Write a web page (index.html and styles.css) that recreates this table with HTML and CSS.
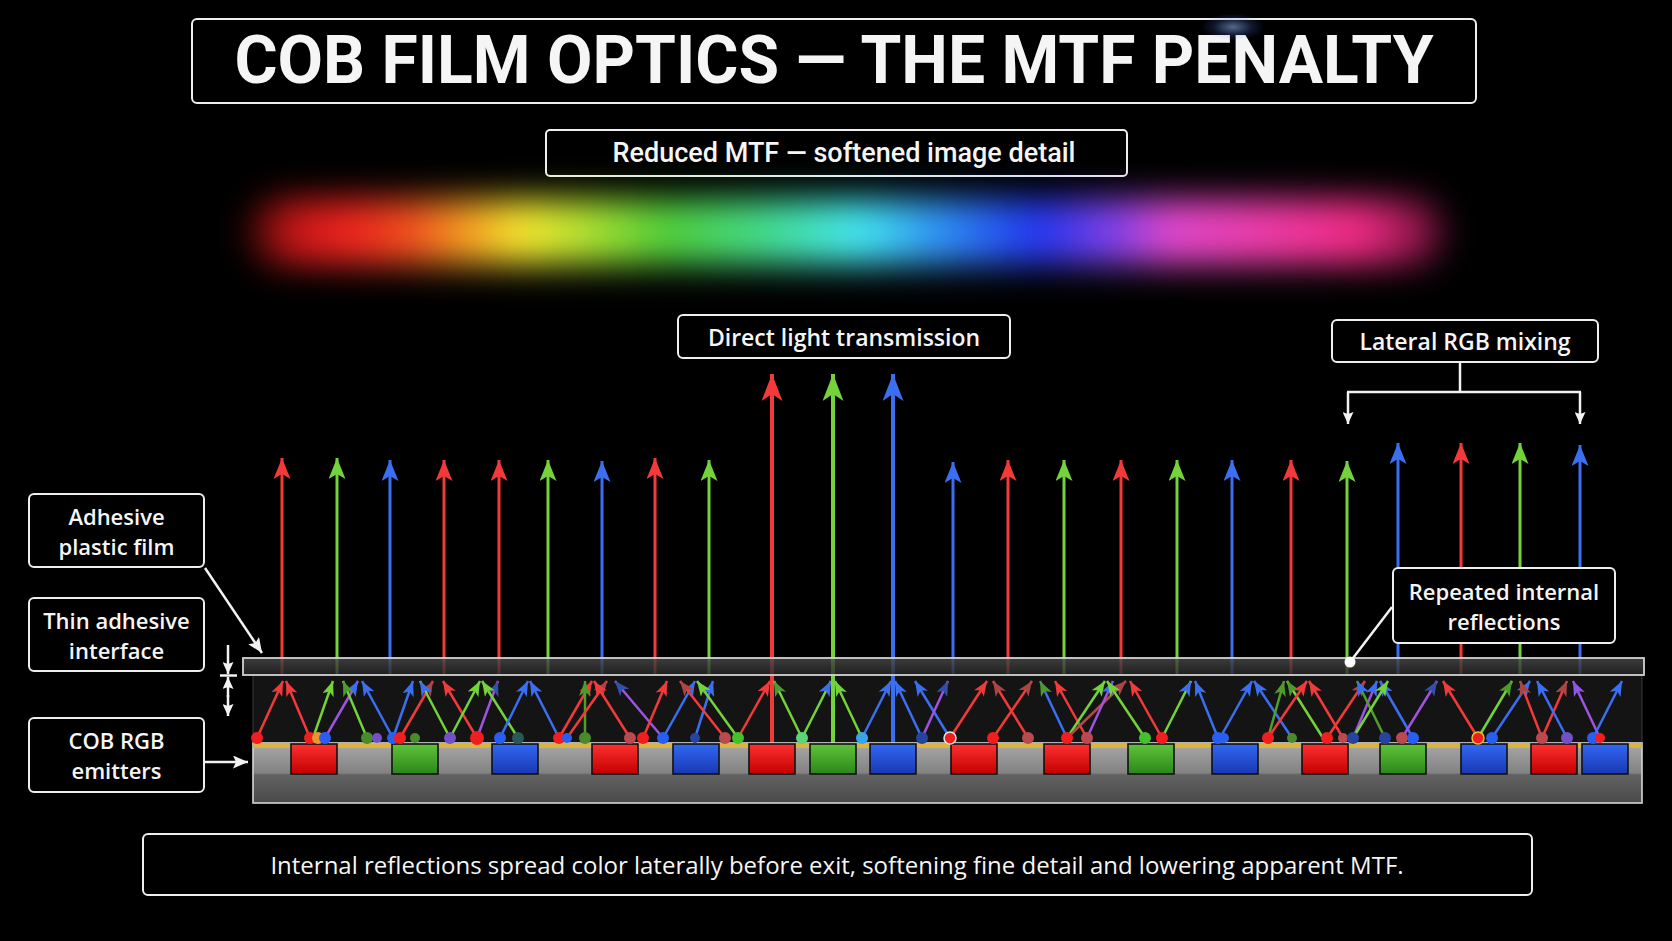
FILE: index.html
```html
<!DOCTYPE html>
<html lang="en">
<head>
<meta charset="utf-8">
<title>COB Film Optics — The MTF Penalty</title>
<link rel="stylesheet" href="styles.css">
</head>
<body>
<div class="page">
  <header class="title-box"><h1 class="title">COB FILM OPTICS — THE MTF PENALTY</h1></header>
  <div class="subtitle">Reduced MTF — softened image detail</div>
  <div class="spectrum"></div>

  <div class="diagram">
    <svg class="diagram-svg" width="1672" height="572" viewBox="0 261 1672 572" xmlns="http://www.w3.org/2000/svg">
      <defs>
        <linearGradient id="gR" x1="0" y1="0" x2="0" y2="1"><stop offset="0" stop-color="#ff3030"/><stop offset="1" stop-color="#c20000"/></linearGradient>
        <linearGradient id="gG" x1="0" y1="0" x2="0" y2="1"><stop offset="0" stop-color="#5fc438"/><stop offset="1" stop-color="#2c861c"/></linearGradient>
        <linearGradient id="gB" x1="0" y1="0" x2="0" y2="1"><stop offset="0" stop-color="#3268f4"/><stop offset="1" stop-color="#1838b2"/></linearGradient>
        <linearGradient id="gSub" x1="0" y1="0" x2="0" y2="1">
          <stop offset="0" stop-color="#a8a8a8"/><stop offset="0.5" stop-color="#828282"/>
          <stop offset="0.53" stop-color="#626262"/><stop offset="1" stop-color="#4a4a4a"/>
        </linearGradient>
        <linearGradient id="gFilm" x1="0" y1="0" x2="0" y2="1"><stop offset="0" stop-color="#4a4a4a"/><stop offset="1" stop-color="#262626"/></linearGradient>

        <marker id="vr" markerUnits="userSpaceOnUse" markerWidth="21" markerHeight="17" refX="21" refY="8.5" orient="auto"><path d="M21,8.5 L0,0 L5,8.5 L0,17 Z" class="f-r"/></marker>
        <marker id="vg" markerUnits="userSpaceOnUse" markerWidth="21" markerHeight="17" refX="21" refY="8.5" orient="auto"><path d="M21,8.5 L0,0 L5,8.5 L0,17 Z" class="f-g"/></marker>
        <marker id="vb" markerUnits="userSpaceOnUse" markerWidth="21" markerHeight="17" refX="21" refY="8.5" orient="auto"><path d="M21,8.5 L0,0 L5,8.5 L0,17 Z" class="f-b"/></marker>
        <marker id="tr" markerUnits="userSpaceOnUse" markerWidth="27" markerHeight="21" refX="27" refY="10.5" orient="auto"><path d="M27,10.5 L0,0 L7,10.5 L0,21 Z" class="f-r"/></marker>
        <marker id="tg" markerUnits="userSpaceOnUse" markerWidth="27" markerHeight="21" refX="27" refY="10.5" orient="auto"><path d="M27,10.5 L0,0 L7,10.5 L0,21 Z" class="f-g"/></marker>
        <marker id="tb" markerUnits="userSpaceOnUse" markerWidth="27" markerHeight="21" refX="27" refY="10.5" orient="auto"><path d="M27,10.5 L0,0 L7,10.5 L0,21 Z" class="f-b"/></marker>

        <marker id="mr" markerUnits="userSpaceOnUse" markerWidth="15" markerHeight="12" refX="15" refY="6" orient="auto"><path d="M15,6 L0,0 L4,6 L0,12 Z" class="f-r"/></marker>
        <marker id="mdr" markerUnits="userSpaceOnUse" markerWidth="15" markerHeight="12" refX="15" refY="6" orient="auto"><path d="M15,6 L0,0 L4,6 L0,12 Z" class="f-dr"/></marker>
        <marker id="mg" markerUnits="userSpaceOnUse" markerWidth="15" markerHeight="12" refX="15" refY="6" orient="auto"><path d="M15,6 L0,0 L4,6 L0,12 Z" class="f-g"/></marker>
        <marker id="mog" markerUnits="userSpaceOnUse" markerWidth="15" markerHeight="12" refX="15" refY="6" orient="auto"><path d="M15,6 L0,0 L4,6 L0,12 Z" class="f-og"/></marker>
        <marker id="mb" markerUnits="userSpaceOnUse" markerWidth="15" markerHeight="12" refX="15" refY="6" orient="auto"><path d="M15,6 L0,0 L4,6 L0,12 Z" class="f-b"/></marker>
        <marker id="mdb" markerUnits="userSpaceOnUse" markerWidth="15" markerHeight="12" refX="15" refY="6" orient="auto"><path d="M15,6 L0,0 L4,6 L0,12 Z" class="f-db"/></marker>
        <marker id="mp" markerUnits="userSpaceOnUse" markerWidth="15" markerHeight="12" refX="15" refY="6" orient="auto"><path d="M15,6 L0,0 L4,6 L0,12 Z" class="f-p"/></marker>

        <marker id="wa" markerUnits="userSpaceOnUse" markerWidth="15" markerHeight="13" refX="15" refY="6.5" orient="auto"><path d="M15,6.5 L0,0 L3,6.5 L0,13 Z" class="f-w"/></marker>
        <marker id="wd" markerUnits="userSpaceOnUse" markerWidth="12" markerHeight="11" refX="12" refY="5.5" orient="auto"><path d="M12,5.5 L0,0 L2,5.5 L0,11 Z" class="f-w"/></marker>
      </defs>

      <!-- reflection zone -->
      <rect class="zone" x="253" y="675" width="1389" height="68"/>

      <!-- vertical exit rays -->
      <g class="vert">
        <line class="s-r" x1="282" y1="675" x2="282" y2="458" marker-end="url(#vr)"/>
        <line class="s-g" x1="337" y1="675" x2="337" y2="458" marker-end="url(#vg)"/>
        <line class="s-b" x1="390" y1="675" x2="390" y2="460" marker-end="url(#vb)"/>
        <line class="s-r" x1="444" y1="675" x2="444" y2="460" marker-end="url(#vr)"/>
        <line class="s-r" x1="499" y1="675" x2="499" y2="460" marker-end="url(#vr)"/>
        <line class="s-g" x1="548" y1="675" x2="548" y2="460" marker-end="url(#vg)"/>
        <line class="s-b" x1="602" y1="675" x2="602" y2="461" marker-end="url(#vb)"/>
        <line class="s-r" x1="655" y1="675" x2="655" y2="458" marker-end="url(#vr)"/>
        <line class="s-g" x1="709" y1="675" x2="709" y2="460" marker-end="url(#vg)"/>
        <line class="s-b" x1="953" y1="675" x2="953" y2="462" marker-end="url(#vb)"/>
        <line class="s-r" x1="1008" y1="675" x2="1008" y2="460" marker-end="url(#vr)"/>
        <line class="s-g" x1="1064" y1="675" x2="1064" y2="460" marker-end="url(#vg)"/>
        <line class="s-r" x1="1121" y1="675" x2="1121" y2="460" marker-end="url(#vr)"/>
        <line class="s-g" x1="1177" y1="675" x2="1177" y2="460" marker-end="url(#vg)"/>
        <line class="s-b" x1="1232" y1="675" x2="1232" y2="460" marker-end="url(#vb)"/>
        <line class="s-r" x1="1291" y1="675" x2="1291" y2="460" marker-end="url(#vr)"/>
        <line class="s-g" x1="1347" y1="675" x2="1347" y2="461" marker-end="url(#vg)"/>
        <line class="s-b" x1="1398" y1="675" x2="1398" y2="443" marker-end="url(#vb)"/>
        <line class="s-r" x1="1461" y1="675" x2="1461" y2="443" marker-end="url(#vr)"/>
        <line class="s-g" x1="1520" y1="675" x2="1520" y2="443" marker-end="url(#vg)"/>
        <line class="s-b" x1="1580" y1="675" x2="1580" y2="445" marker-end="url(#vb)"/>
      </g>
      <g class="tall">
        <line class="s-r" x1="772" y1="746" x2="772" y2="374" marker-end="url(#tr)"/>
        <line class="s-g" x1="833" y1="746" x2="833" y2="374" marker-end="url(#tg)"/>
        <line class="s-b" x1="893" y1="746" x2="893" y2="374" marker-end="url(#tb)"/>
      </g>

      <!-- adhesive film -->
      <rect class="film" x="243" y="658" width="1401" height="17"/>

      <!-- internal reflection rays -->
      <g class="rays">
        <line class="s-r" x1="257" y1="738" x2="283" y2="681" marker-end="url(#mr)"/>
        <line class="s-r" x1="310" y1="738" x2="286" y2="681" marker-end="url(#mr)"/>
        <line class="s-g" x1="313" y1="738" x2="333" y2="681" marker-end="url(#mg)"/>
        <line class="s-p" x1="325" y1="738" x2="358" y2="681" marker-end="url(#mb)"/>
        <line class="s-g" x1="367" y1="738" x2="343" y2="681" marker-end="url(#mog)"/>
        <line class="s-b" x1="393" y1="738" x2="362" y2="681" marker-end="url(#mb)"/>
        <line class="s-b" x1="393" y1="738" x2="413" y2="681" marker-end="url(#mb)"/>
        <line class="s-r" x1="400" y1="738" x2="433" y2="681" marker-end="url(#mdr)"/>
        <line class="s-g" x1="450" y1="738" x2="420" y2="681" marker-end="url(#mb)"/>
        <line class="s-r" x1="477" y1="738" x2="443" y2="681" marker-end="url(#mr)"/>
        <line class="s-g" x1="450" y1="738" x2="480" y2="681" marker-end="url(#mg)"/>
        <line class="s-p" x1="477" y1="738" x2="498" y2="681" marker-end="url(#mdb)"/>
        <line class="s-g" x1="518" y1="738" x2="482" y2="681" marker-end="url(#mg)"/>
        <line class="s-b" x1="500" y1="738" x2="528" y2="681" marker-end="url(#mb)"/>
        <line class="s-b" x1="559" y1="738" x2="530" y2="681" marker-end="url(#mb)"/>
        <line class="s-r" x1="559" y1="738" x2="592" y2="681" marker-end="url(#mr)"/>
        <line class="s-og" x1="585" y1="738" x2="585" y2="681" marker-end="url(#mog)"/>
        <line class="s-r" x1="567" y1="738" x2="607" y2="681" marker-end="url(#mdr)"/>
        <line class="s-r" x1="630" y1="738" x2="594" y2="681" marker-end="url(#mr)"/>
        <line class="s-p" x1="663" y1="738" x2="615" y2="681" marker-end="url(#mdb)"/>
        <line class="s-r" x1="643" y1="738" x2="667" y2="681" marker-end="url(#mr)"/>
        <line class="s-b" x1="663" y1="738" x2="695" y2="681" marker-end="url(#mb)"/>
        <line class="s-b" x1="695" y1="738" x2="713" y2="681" marker-end="url(#mb)"/>
        <line class="s-r" x1="725" y1="738" x2="680" y2="681" marker-end="url(#mdr)"/>
        <line class="s-g" x1="738" y1="738" x2="697" y2="681" marker-end="url(#mg)"/>
        <line class="s-r" x1="738" y1="738" x2="770" y2="681" marker-end="url(#mr)"/>
        <line class="s-g" x1="802" y1="738" x2="774" y2="681" marker-end="url(#mog)"/>
        <line class="s-g" x1="802" y1="738" x2="831" y2="681" marker-end="url(#mb)"/>
        <line class="s-g" x1="862" y1="738" x2="835" y2="681" marker-end="url(#mg)"/>
        <line class="s-b" x1="862" y1="738" x2="891" y2="681" marker-end="url(#mb)"/>
        <line class="s-b" x1="922" y1="738" x2="895" y2="681" marker-end="url(#mb)"/>
        <line class="s-b" x1="950" y1="738" x2="915" y2="681" marker-end="url(#mb)"/>
        <line class="s-p" x1="922" y1="738" x2="948" y2="681" marker-end="url(#mdb)"/>
        <line class="s-r" x1="950" y1="738" x2="987" y2="681" marker-end="url(#mr)"/>
        <line class="s-r" x1="1028" y1="738" x2="993" y2="681" marker-end="url(#mdr)"/>
        <line class="s-r" x1="993" y1="738" x2="1032" y2="681" marker-end="url(#mdr)"/>
        <line class="s-b" x1="1067" y1="738" x2="1040" y2="681" marker-end="url(#mog)"/>
        <line class="s-r" x1="1087" y1="738" x2="1055" y2="681" marker-end="url(#mr)"/>
        <line class="s-g" x1="1067" y1="738" x2="1105" y2="681" marker-end="url(#mg)"/>
        <line class="s-dr" x1="1067" y1="738" x2="1126" y2="681" marker-end="url(#mdr)"/>
        <line class="s-p" x1="1087" y1="738" x2="1113" y2="681" marker-end="url(#mb)"/>
        <line class="s-g" x1="1145" y1="738" x2="1107" y2="681" marker-end="url(#mg)"/>
        <line class="s-r" x1="1162" y1="738" x2="1130" y2="681" marker-end="url(#mr)"/>
        <line class="s-g" x1="1162" y1="738" x2="1191" y2="681" marker-end="url(#mb)"/>
        <line class="s-b" x1="1218" y1="738" x2="1195" y2="681" marker-end="url(#mb)"/>
        <line class="s-b" x1="1220" y1="738" x2="1252" y2="681" marker-end="url(#mb)"/>
        <line class="s-b" x1="1292" y1="738" x2="1254" y2="681" marker-end="url(#mb)"/>
        <line class="s-g" x1="1323" y1="738" x2="1287" y2="681" marker-end="url(#mog)"/>
        <line class="s-og" x1="1268" y1="738" x2="1284" y2="681" marker-end="url(#mog)"/>
        <line class="s-r" x1="1268" y1="738" x2="1307" y2="681" marker-end="url(#mr)"/>
        <line class="s-r" x1="1343" y1="738" x2="1309" y2="681" marker-end="url(#mr)"/>
        <line class="s-r" x1="1327" y1="738" x2="1365" y2="681" marker-end="url(#mdr)"/>
        <line class="s-p" x1="1353" y1="738" x2="1377" y2="681" marker-end="url(#mb)"/>
        <line class="s-og" x1="1385" y1="738" x2="1357" y2="681" marker-end="url(#mb)"/>
        <line class="s-b" x1="1413" y1="738" x2="1380" y2="681" marker-end="url(#mb)"/>
        <line class="s-g" x1="1353" y1="738" x2="1388" y2="681" marker-end="url(#mg)"/>
        <line class="s-p" x1="1402" y1="738" x2="1437" y2="681" marker-end="url(#mdb)"/>
        <line class="s-r" x1="1478" y1="738" x2="1443" y2="681" marker-end="url(#mr)"/>
        <line class="s-g" x1="1478" y1="738" x2="1512" y2="681" marker-end="url(#mog)"/>
        <line class="s-b" x1="1492" y1="738" x2="1530" y2="681" marker-end="url(#mb)"/>
        <line class="s-r" x1="1542" y1="738" x2="1520" y2="681" marker-end="url(#mdr)"/>
        <line class="s-r" x1="1542" y1="738" x2="1567" y2="681" marker-end="url(#mdr)"/>
        <line class="s-b" x1="1567" y1="738" x2="1537" y2="681" marker-end="url(#mb)"/>
        <line class="s-p" x1="1600" y1="738" x2="1573" y2="681" marker-end="url(#mp)"/>
        <line class="s-b" x1="1593" y1="738" x2="1622" y2="681" marker-end="url(#mb)"/>
      </g>

      <!-- substrate and emitters -->
      <rect class="substrate" x="253" y="743" width="1389" height="60"/>
      <rect class="glue" x="253" y="743" width="1389" height="5"/>
      <g class="emitters">
        <rect class="em-r" x="291" y="744" width="46" height="30"/>
        <rect class="em-g" x="392" y="744" width="46" height="30"/>
        <rect class="em-b" x="492" y="744" width="46" height="30"/>
        <rect class="em-r" x="592" y="744" width="46" height="30"/>
        <rect class="em-b" x="673" y="744" width="46" height="30"/>
        <rect class="em-r" x="749" y="744" width="46" height="30"/>
        <rect class="em-g" x="810" y="744" width="46" height="30"/>
        <rect class="em-b" x="870" y="744" width="46" height="30"/>
        <rect class="em-r" x="951" y="744" width="46" height="30"/>
        <rect class="em-r" x="1044" y="744" width="46" height="30"/>
        <rect class="em-g" x="1128" y="744" width="46" height="30"/>
        <rect class="em-b" x="1212" y="744" width="46" height="30"/>
        <rect class="em-r" x="1302" y="744" width="46" height="30"/>
        <rect class="em-g" x="1380" y="744" width="46" height="30"/>
        <rect class="em-b" x="1461" y="744" width="46" height="30"/>
        <rect class="em-r" x="1531" y="744" width="46" height="30"/>
        <rect class="em-b" x="1582" y="744" width="46" height="30"/>
      </g>

      <!-- reflection points -->
      <g class="dots">
        <circle class="d-r" cx="257" cy="738" r="6"/>
        <circle class="d-r" cx="310" cy="738" r="6"/>
        <circle class="d-o" cx="318" cy="738" r="6"/>
        <circle class="d-b" cx="325" cy="738" r="6"/>
        <circle class="d-og" cx="367" cy="738" r="6"/>
        <circle class="d-p" cx="377" cy="738" r="5"/>
        <circle class="d-b" cx="393" cy="738" r="6"/>
        <circle class="d-r" cx="400" cy="738" r="6"/>
        <circle class="d-og" cx="415" cy="738" r="5"/>
        <circle class="d-p" cx="450" cy="738" r="6"/>
        <circle class="d-r" cx="477" cy="738" r="7"/>
        <circle class="d-b" cx="500" cy="738" r="6"/>
        <circle class="d-t" cx="518" cy="738" r="6"/>
        <circle class="d-r" cx="559" cy="738" r="6"/>
        <circle class="d-b" cx="567" cy="738" r="5"/>
        <circle class="d-og" cx="585" cy="738" r="6"/>
        <circle class="d-dr" cx="630" cy="738" r="6"/>
        <circle class="d-r" cx="643" cy="738" r="6"/>
        <circle class="d-b" cx="663" cy="738" r="6"/>
        <circle class="d-db" cx="695" cy="738" r="5"/>
        <circle class="d-dr" cx="725" cy="738" r="6"/>
        <circle class="d-g" cx="738" cy="738" r="6"/>
        <circle class="d-lg" cx="802" cy="738" r="6"/>
        <circle class="d-lb" cx="862" cy="738" r="6"/>
        <circle class="d-db" cx="922" cy="738" r="6"/>
        <circle class="d-r ring" cx="950" cy="738" r="6"/>
        <circle class="d-r" cx="993" cy="738" r="6"/>
        <circle class="d-dr" cx="1028" cy="738" r="6"/>
        <circle class="d-r" cx="1067" cy="738" r="6"/>
        <circle class="d-dr" cx="1087" cy="738" r="6"/>
        <circle class="d-g" cx="1145" cy="738" r="6"/>
        <circle class="d-r" cx="1162" cy="738" r="6"/>
        <circle class="d-b" cx="1218" cy="738" r="6"/>
        <circle class="d-b" cx="1224" cy="738" r="5"/>
        <circle class="d-r" cx="1268" cy="738" r="6"/>
        <circle class="d-og" cx="1292" cy="738" r="5"/>
        <circle class="d-r" cx="1327" cy="738" r="6"/>
        <circle class="d-dr" cx="1343" cy="738" r="5"/>
        <circle class="d-db" cx="1353" cy="738" r="6"/>
        <circle class="d-db" cx="1385" cy="738" r="6"/>
        <circle class="d-dr" cx="1402" cy="738" r="6"/>
        <circle class="d-b" cx="1413" cy="738" r="6"/>
        <circle class="d-r ring-y" cx="1478" cy="738" r="6"/>
        <circle class="d-b" cx="1492" cy="738" r="6"/>
        <circle class="d-dr" cx="1542" cy="738" r="6"/>
        <circle class="d-p" cx="1567" cy="738" r="6"/>
        <circle class="d-b" cx="1593" cy="738" r="6"/>
        <circle class="d-r" cx="1600" cy="738" r="5"/>
      </g>

      <!-- white callout connectors -->
      <g class="callouts">
        <line x1="205" y1="568" x2="262" y2="653" marker-end="url(#wa)"/>
        <line x1="228" y1="645" x2="228" y2="674" marker-end="url(#wd)"/>
        <line x1="220" y1="675.5" x2="237" y2="675.5"/>
        <line x1="228" y1="697" x2="228" y2="677" marker-end="url(#wd)"/>
        <line x1="228" y1="695" x2="228" y2="716" marker-end="url(#wd)"/>
        <line x1="205" y1="762" x2="248" y2="762" marker-end="url(#wa)"/>
        <line x1="1392" y1="607" x2="1350" y2="662"/>
        <line x1="1460" y1="363" x2="1460" y2="392"/>
        <line x1="1347" y1="392" x2="1581" y2="392"/>
        <line x1="1348" y1="392" x2="1348" y2="424" marker-end="url(#wd)"/>
        <line x1="1580" y1="392" x2="1580" y2="424" marker-end="url(#wd)"/>
      </g>
      <circle class="pin" cx="1350" cy="662" r="5.5"/>
    </svg>

    <div class="label label-direct">Direct light transmission</div>
    <div class="label label-lateral">Lateral RGB mixing</div>
    <div class="label label-two label-adhesive">Adhesive<br>plastic film</div>
    <div class="label label-two label-thin">Thin adhesive<br>interface</div>
    <div class="label label-two label-cob">COB RGB<br>emitters</div>
    <div class="label label-two label-repeated">Repeated internal<br>reflections</div>
  </div>

  <div class="caption">Internal reflections spread color laterally before exit, softening fine detail and lowering apparent MTF.</div>
</div>
</body>
</html>
```

FILE: styles.css
```css
html, body {
  margin: 0;
  padding: 0;
  background: #000;
}

.page {
  width: 1672px;
  height: 941px;
  overflow: hidden;
  display: flex;
  flex-direction: column;
  align-items: center;
  background: #000;
  color: #f4f4f4;
}

.title-box {
  position: relative;
  margin-top: 18px;
  width: 1286px;
  height: 86px;
  box-sizing: border-box;
  border: 2.5px solid #eeeeee;
  border-radius: 6px;
  display: flex;
  align-items: center;
  justify-content: center;
  transform: translateX(-2px);
}

/* small lens glint on the title frame */
.title-box::after {
  content: "";
  position: absolute;
  left: 1010px;
  top: -6px;
  width: 60px;
  height: 26px;
  background: radial-gradient(ellipse at center, rgba(150, 190, 255, 0.55) 0%, rgba(90, 130, 255, 0.18) 45%, rgba(0, 0, 0, 0) 75%);
  pointer-events: none;
}

.title {
  margin: 0;
  font-family: Roboto, "Liberation Sans", sans-serif;
  font-weight: 700;
  font-size: 66px;
  line-height: 1;
  letter-spacing: 0;
  color: #f5f5f5;
  white-space: nowrap;
}

.subtitle {
  margin-top: 25px;
  width: 583px;
  height: 48px;
  box-sizing: border-box;
  padding-left: 16px;
  border: 2.5px solid #eeeeee;
  border-radius: 5px;
  display: flex;
  align-items: center;
  justify-content: center;
  font-family: Roboto, "Liberation Sans", sans-serif;
  font-weight: 500;
  font-size: 27px;
  color: #f5f5f5;
  white-space: nowrap;
}

.spectrum {
  align-self: flex-start;
  margin-top: 22px;
  margin-left: 248px;
  width: 1196px;
  height: 66px;
  border-radius: 33px;
  background: linear-gradient(90deg,
    #4a0606 0%,
    #c81818 4%,
    #ec221e 8%,
    #f2481e 13%,
    #f59a22 18%,
    #f6e82e 23%,
    #a6e032 29%,
    #50d03a 35%,
    #44dc8c 43%,
    #44e8f2 51%,
    #2f90f4 58%,
    #2236f2 66%,
    #8c42e8 73%,
    #e048cc 77%,
    #ee3ca8 85%,
    #f02a82 93%,
    #5e0e30 100%);
  filter: blur(17px);
}

.diagram {
  position: relative;
  width: 1672px;
  height: 572px;
  flex: none;
  margin-top: -4px;
}

.diagram-svg {
  display: block;
}

/* strokes */
.vert line { stroke-width: 3; }
.tall line { stroke-width: 4; }
.rays line { stroke-width: 2.5; }

.s-r { stroke: #f23a3a; }
.s-dr { stroke: #b04a4a; }
.s-g { stroke: #74d23a; }
.s-og { stroke: #519e2c; }
.s-b { stroke: #3b6ff0; }
.s-db { stroke: #2f4fa8; }
.s-p { stroke: #a052e0; }

.f-r { fill: #f23a3a; }
.f-dr { fill: #a84646; }
.f-g { fill: #74d23a; }
.f-og { fill: #4f9a2a; }
.f-b { fill: #3b6ff0; }
.f-db { fill: #3050aa; }
.f-p { fill: #8e58e6; }
.f-w { fill: #f2f2f2; }

.zone {
  fill: #141414;
  stroke: #3a3a3a;
  stroke-width: 1;
}

.film {
  fill: url(#gFilm);
  fill-opacity: 0.82;
  stroke: #d2d2d2;
  stroke-width: 1.8;
}

.substrate {
  fill: url(#gSub);
  stroke: #d6d6d6;
  stroke-width: 1.6;
}

.glue { fill: #dcb43c; }

.emitters rect {
  stroke: #111;
  stroke-width: 1.6;
}
.em-r { fill: url(#gR); }
.em-g { fill: url(#gG); }
.em-b { fill: url(#gB); }

.d-r { fill: #f01e1e; }
.d-dr { fill: #b84a50; }
.d-o { fill: #e8962e; }
.d-g { fill: #44c02c; }
.d-og { fill: #4a8a2a; }
.d-lg { fill: #5ed27a; }
.d-b { fill: #2a5ef0; }
.d-db { fill: #25449e; }
.d-lb { fill: #3aa4ea; }
.d-p { fill: #7450c8; }
.d-t { fill: #2a5858; }
.ring { stroke: #e8e8e8; stroke-width: 1.5; }
.ring-y { stroke: #f0c030; stroke-width: 1.5; }

.callouts line {
  stroke: #f2f2f2;
  stroke-width: 2.5;
}
.pin { fill: #ffffff; }

/* labels */
.label {
  position: absolute;
  box-sizing: border-box;
  border: 2.5px solid #eeeeee;
  border-radius: 6px;
  background: #000;
  color: #f5f5f5;
  display: flex;
  align-items: center;
  justify-content: center;
  text-align: center;
  font-family: "Open Sans", "Noto Sans", sans-serif;
  font-weight: 600;
  font-size: 23px;
  line-height: 32px;
  white-space: nowrap;
}

.label-two {
  font-size: 22px;
  line-height: 30px;
}

.label-direct   { left: 677px;  top: 53px;  width: 334px; height: 45px; }
.label-lateral  { left: 1331px; top: 58px;  width: 268px; height: 44px; }
.label-adhesive { left: 28px;   top: 232px; width: 177px; height: 75px; }
.label-thin     { left: 28px;   top: 336px; width: 177px; height: 75px; }
.label-cob      { left: 28px;   top: 456px; width: 177px; height: 76px; }
.label-repeated { left: 1392px; top: 306px; width: 224px; height: 77px; }

.caption {
  width: 1391px;
  height: 63px;
  box-sizing: border-box;
  border: 2.5px solid #eeeeee;
  border-radius: 6px;
  display: flex;
  align-items: center;
  justify-content: center;
  font-family: "Open Sans", "Noto Sans", sans-serif;
  font-weight: 400;
  font-size: 24px;
  letter-spacing: 0;
  color: #f5f5f5;
  white-space: nowrap;
  transform: translateX(1px);
}
```
